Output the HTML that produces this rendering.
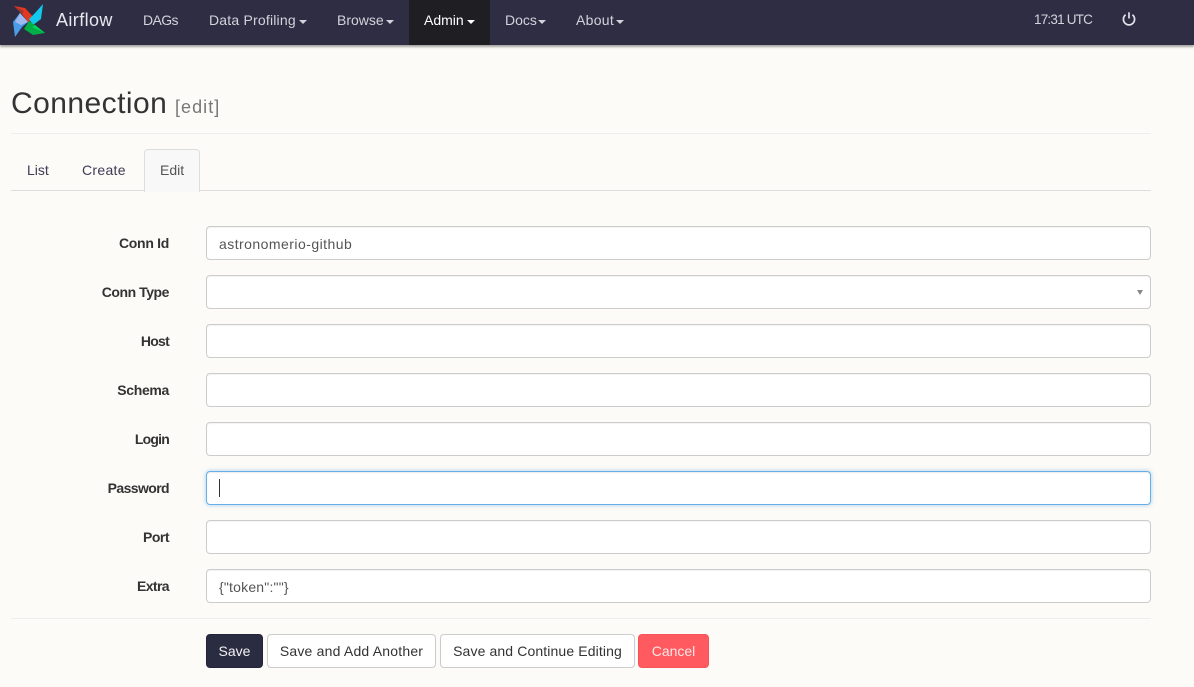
<!DOCTYPE html>
<html><head><meta charset="utf-8"><style>
html,body{margin:0;padding:0}
body{width:1194px;height:687px;overflow:hidden;background:#fdfbf7;font-family:"Liberation Sans",sans-serif;position:relative;color:#333}
.t{position:absolute;white-space:nowrap;font-size:14px;line-height:20px}
.n{color:#d4d2da;top:10px}
.c{display:inline-block;width:0;height:0;border-top:4px solid #d4d2da;border-left:4px solid transparent;border-right:4px solid transparent;position:absolute;top:20px}
.l{font-weight:bold;right:1025px;color:#333;font-size:14px}
.i{position:absolute;left:206px;width:943px;height:32px;border:1px solid #ccc;border-radius:4px;background:#fff;box-shadow:inset 0 1px 1px rgba(0,0,0,.05)}
.b{position:absolute;top:634px;height:32px;border:1px solid #ccc;border-radius:4px;background:#fff;color:#333;font-size:14px;line-height:32px;text-align:center;white-space:nowrap}
</style></head><body>
<div style="position:absolute;left:0;top:0;width:1194px;height:45px;background:#2f2d44;box-shadow:0 2px 2px rgba(0,0,0,.35)"></div>
<div style="position:absolute;left:409px;top:0;width:81px;height:45px;background:#1f1e22"></div>
<svg style="position:absolute;left:0;top:0" width="60" height="45" viewBox="0 0 60 45">
<polygon points="14,6 25,8 35,19 28,22 22,14" fill="#e43921"/>
<polygon points="14,6 22,14 24,11" fill="#a5342a"/>
<polygon points="43,4 41,19 33,25 29,19 36,12" fill="#11c8ed"/>
<polygon points="45,33 33,35 24,29 29,21 35,25" fill="#00ad46"/>
<polygon points="45,33 35,25 32,27" fill="#04d659"/>
<polygon points="15,37 13,22 20,13 28,22 22,27" fill="#4a9be8"/>
<polygon points="20,13 28,22 21,25 15,22" fill="#9db9ef"/>
</svg>
<span class="t" style="left:56px;top:10px;font-size:18px;color:#e8e6ef;letter-spacing:.4px">Airflow</span>
<span class="t n" style="left:143px;letter-spacing:-.6px">DAGs</span>
<span class="t n" style="left:209px;letter-spacing:.2px">Data Profiling</span><i class="c" style="left:299px"></i>
<span class="t n" style="left:337px">Browse</span><i class="c" style="left:386px"></i>
<span class="t n" style="left:424px;color:#fff">Admin</span><i class="c" style="left:467px;border-top-color:#fff"></i>
<span class="t n" style="left:505px">Docs</span><i class="c" style="left:538px"></i>
<span class="t n" style="left:576px;letter-spacing:.3px">About</span><i class="c" style="left:616px"></i>
<span class="t n" style="left:1034px;font-size:13.5px;letter-spacing:-.8px">17:31 UTC</span>
<svg style="position:absolute;left:1122px;top:12px" width="14" height="14" viewBox="0 0 14 14" fill="none" stroke="#e4e2ea" stroke-width="1.7"><path d="M3.6 2.8A5.6 5.6 0 1 0 10.4 2.8"/><path d="M7 0.3V6.5"/></svg>

<span class="t" style="left:11px;top:86px;font-size:30px;line-height:36px;letter-spacing:.45px;color:#333">Connection</span>
<span class="t" style="left:175px;top:96px;font-size:18px;line-height:22px;color:#777;letter-spacing:1.05px">[edit]</span>
<div style="position:absolute;left:11px;top:133px;width:1140px;height:1px;background:#eee"></div>
<div style="position:absolute;left:11px;top:190px;width:1140px;height:1px;background:#ddd"></div>
<div style="position:absolute;left:144px;top:149px;width:54px;height:42px;border:1px solid #ddd;border-bottom:0;border-radius:4px 4px 0 0;background:#f8f8f9"></div>
<span class="t" style="left:27px;top:160px;color:#3f3a55">List</span>
<span class="t" style="left:82px;top:160px;color:#3f3a55;letter-spacing:.3px">Create</span>
<span class="t" style="left:160px;top:160px;color:#555">Edit</span>

<span class="t l" style="top:233px;letter-spacing:-.3px">Conn Id</span>
<span class="t l" style="top:282px;letter-spacing:-.45px">Conn Type</span>
<span class="t l" style="top:331px;letter-spacing:-.75px">Host</span>
<span class="t l" style="top:380px;letter-spacing:-.33px">Schema</span>
<span class="t l" style="top:429px;letter-spacing:-.8px">Login</span>
<span class="t l" style="top:478px;letter-spacing:-.6px">Password</span>
<span class="t l" style="top:527px;letter-spacing:-.5px">Port</span>
<span class="t l" style="top:576px;letter-spacing:-.6px">Extra</span>

<div class="i" style="top:226px"></div>
<span class="t" style="left:219px;top:234px;color:#555;letter-spacing:.46px">astronomerio-github</span>
<div class="i" style="top:275px"></div>
<div style="position:absolute;left:1137px;top:290px;width:0;height:0;border-top:5px solid #888;border-left:3px solid transparent;border-right:3px solid transparent"></div>
<div class="i" style="top:324px"></div>
<div class="i" style="top:373px"></div>
<div class="i" style="top:422px"></div>
<div class="i" style="top:471px;border-color:#66afe9;box-shadow:inset 0 1px 1px rgba(0,0,0,.075),0 0 5px rgba(102,175,233,.6)"></div>
<div style="position:absolute;left:219px;top:479px;width:1px;height:18px;background:#333"></div>
<div class="i" style="top:520px"></div>
<div class="i" style="top:569px"></div>
<span class="t" style="left:219px;top:577px;color:#555;letter-spacing:.2px">{"token":""}</span>
<div style="position:absolute;left:11px;top:618px;width:1140px;height:1px;background:#eee"></div>

<div class="b" style="left:206px;width:55px;background:#2a2c42;border-color:#23243a;color:#f2f2f2">Save</div>
<div class="b" style="left:267px;width:167px;letter-spacing:.2px">Save and Add Another</div>
<div class="b" style="left:440px;width:193px;letter-spacing:.12px">Save and Continue Editing</div>
<div class="b" style="left:638px;width:69px;background:#ff5a5f;border-color:#f4545a;color:#fde6e6">Cancel</div>
</body></html>
